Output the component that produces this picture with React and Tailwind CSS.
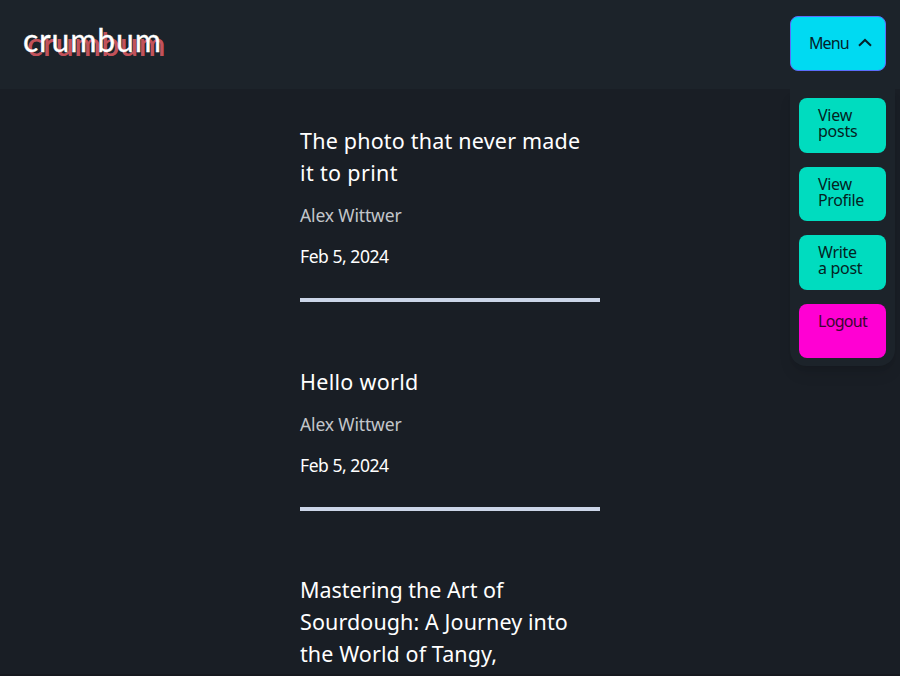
const posts = [
  {
    lines: [
      ["The photo that never made", "tracking-[0.2px]"],
      ["it to print", "tracking-[0.35px]"],
    ],
  },
  { lines: [["Hello world", "tracking-[0.3px]"]] },
  {
    lines: [
      ["Mastering the Art of", "tracking-[0px]"],
      ["Sourdough: A Journey into", "tracking-[0.1px]"],
      ["the World of Tangy,", "tracking-[0.1px]"],
    ],
  },
];

const items = [
  { lines: ["View", "posts"], tone: "bg-[#00dcbf] text-[#04231f] tracking-[-0.25px]" },
  { lines: ["View", "Profile"], tone: "bg-[#00dcbf] text-[#04231f] tracking-[-0.35px]" },
  { lines: ["Write", "a post"], tone: "bg-[#00dcbf] text-[#04231f] tracking-[-0.3px]" },
  { lines: ["Logout"], tone: "bg-[#ff00d3] text-[#3a0630] tracking-[-0.7px]" },
];

function Post({ lines }) {
  return (
    <article className="mb-[63.5px] w-[300px] whitespace-nowrap border-b-4 border-[#cbd5e8] pb-7">
      <h2 className="text-[21.5px] leading-8 text-white">
        {lines.map(([text, tracking]) => (
          <span key={text} className={`block ${tracking}`}>{text}</span>
        ))}
      </h2>
      <p className="mt-3 text-[17.5px] leading-[28px] tracking-[-0.15px] text-[#c3c6ca]">Alex Wittwer</p>
      <p className="mt-[13px] text-[17.5px] leading-[28px] tracking-[-0.45px] text-white">Feb 5, 2024</p>
    </article>
  );
}

export default function App() {
  return (
    <div className="relative h-[676px] w-[900px] overflow-hidden bg-[#191e25] font-['Noto_Sans',sans-serif]">
      <header className="flex h-[89px] items-start justify-between bg-[#1c232a] pl-[23px] pr-[14px] pt-4">
        <div className="mt-1 font-['Lato',sans-serif] text-[32px] leading-10 tracking-[0.8px] text-white [-webkit-text-stroke:0.3px] [text-shadow:4px_4px_0_#c2525a,4.5px_4px_0_#c2525a]">crumbum</div>
        <button className="flex h-[55px] w-24 items-center rounded-lg border border-[#5b6cfa] bg-[#00daf2] pb-[2px] pl-[18px] text-[16px] tracking-[-0.9px] text-[#04222a]">
          Menu
          <svg className="ml-[9px]" width="14" height="9" viewBox="0 0 14 9" fill="none" stroke="#04222a" strokeWidth="2">
            <path d="M1 7.7 7 2 13 7.7" />
          </svg>
        </button>
      </header>
      <main className="ml-[300px] pt-9">
        {posts.map((post) => <Post key={post.lines[0][0]} lines={post.lines} />)}
      </main>
      <nav className="absolute left-[790px] top-[89px] flex h-[277px] w-[105px] flex-col gap-[14px] rounded-b-2xl bg-[#1c232a] pl-[9px] pt-[9px] shadow-lg">
        {items.map(({ lines, tone }) => (
          <a key={lines.join(" ")} className={`h-[54.6px] w-[87px] shrink-0 rounded-lg pl-[19px] pt-[9px] text-[16px] leading-4 ${tone}`}>
            {lines.map((line) => <span key={line} className="block whitespace-nowrap">{line}</span>)}
          </a>
        ))}
      </nav>
      <div className="absolute bottom-0 left-0 h-0.5 w-full bg-[#16191f]" />
    </div>
  );
}
